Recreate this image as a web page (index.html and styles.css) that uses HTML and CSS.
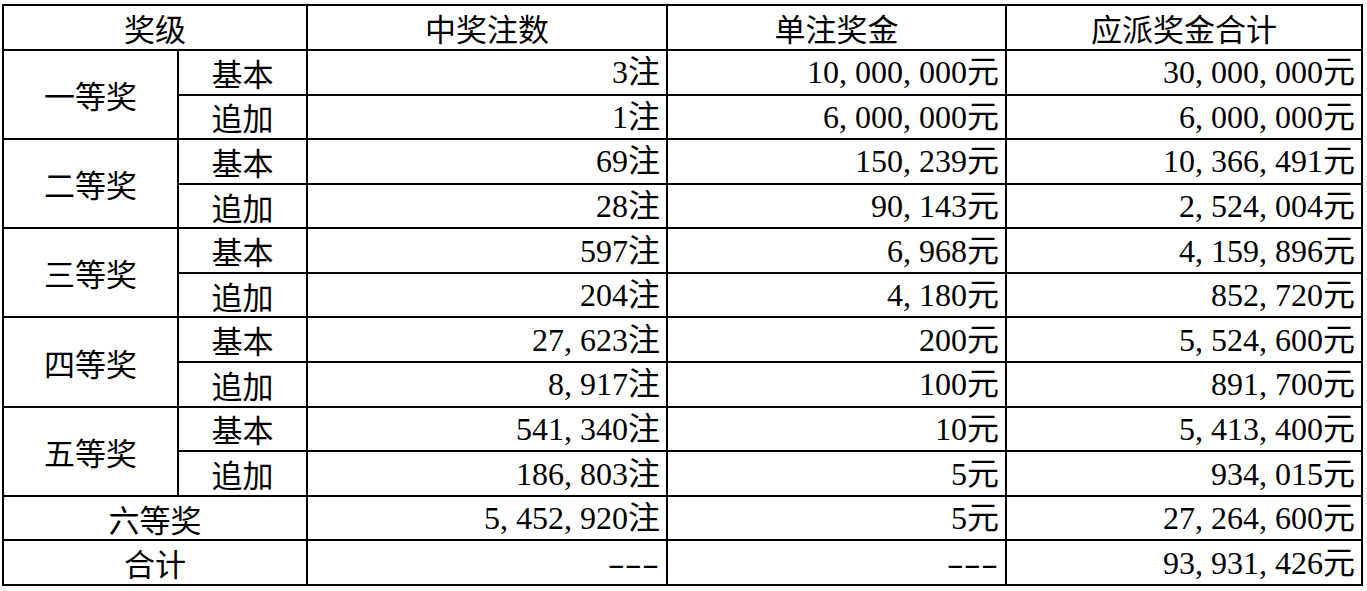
FILE: index.html
```html
<!DOCTYPE html>
<html lang="zh-CN">
<head>
<meta charset="utf-8">
<title>开奖详情</title>
<link rel="stylesheet" href="styles.css">
</head>
<body>
<div class="grid">
  <div class="cell hd span2">奖级</div>
  <div class="cell hd">中奖注数</div>
  <div class="cell hd">单注奖金</div>
  <div class="cell hd">应派奖金合计</div>

  <div class="cell lv rows2">一等奖</div>
  <div class="cell sub">基本</div>
  <div class="cell num">3注</div>
  <div class="cell num">10<span class="c">,</span>000<span class="c">,</span>000元</div>
  <div class="cell num">30<span class="c">,</span>000<span class="c">,</span>000元</div>
  <div class="cell sub">追加</div>
  <div class="cell num">1注</div>
  <div class="cell num">6<span class="c">,</span>000<span class="c">,</span>000元</div>
  <div class="cell num">6<span class="c">,</span>000<span class="c">,</span>000元</div>

  <div class="cell lv rows2">二等奖</div>
  <div class="cell sub">基本</div>
  <div class="cell num">69注</div>
  <div class="cell num">150<span class="c">,</span>239元</div>
  <div class="cell num">10<span class="c">,</span>366<span class="c">,</span>491元</div>
  <div class="cell sub">追加</div>
  <div class="cell num">28注</div>
  <div class="cell num">90<span class="c">,</span>143元</div>
  <div class="cell num">2<span class="c">,</span>524<span class="c">,</span>004元</div>

  <div class="cell lv rows2">三等奖</div>
  <div class="cell sub">基本</div>
  <div class="cell num">597注</div>
  <div class="cell num">6<span class="c">,</span>968元</div>
  <div class="cell num">4<span class="c">,</span>159<span class="c">,</span>896元</div>
  <div class="cell sub">追加</div>
  <div class="cell num">204注</div>
  <div class="cell num">4<span class="c">,</span>180元</div>
  <div class="cell num">852<span class="c">,</span>720元</div>

  <div class="cell lv rows2">四等奖</div>
  <div class="cell sub">基本</div>
  <div class="cell num">27<span class="c">,</span>623注</div>
  <div class="cell num">200元</div>
  <div class="cell num">5<span class="c">,</span>524<span class="c">,</span>600元</div>
  <div class="cell sub">追加</div>
  <div class="cell num">8<span class="c">,</span>917注</div>
  <div class="cell num">100元</div>
  <div class="cell num">891<span class="c">,</span>700元</div>

  <div class="cell lv rows2">五等奖</div>
  <div class="cell sub">基本</div>
  <div class="cell num">541<span class="c">,</span>340注</div>
  <div class="cell num">10元</div>
  <div class="cell num">5<span class="c">,</span>413<span class="c">,</span>400元</div>
  <div class="cell sub">追加</div>
  <div class="cell num">186<span class="c">,</span>803注</div>
  <div class="cell num">5元</div>
  <div class="cell num">934<span class="c">,</span>015元</div>

  <div class="cell lv span2">六等奖</div>
  <div class="cell num">5<span class="c">,</span>452<span class="c">,</span>920注</div>
  <div class="cell num">5元</div>
  <div class="cell num">27<span class="c">,</span>264<span class="c">,</span>600元</div>

  <div class="cell lv span2">合计</div>
  <div class="cell num"><span class="d">---</span></div>
  <div class="cell num"><span class="d">---</span></div>
  <div class="cell num">93<span class="c">,</span>931<span class="c">,</span>426元</div>
</div>
</body>
</html>
```

FILE: styles.css
```css
html, body {
  margin: 0;
  padding: 0;
  background: #ffffff;
}

body {
  padding: 4px 0 0 2px;
  font-family: "Liberation Serif", "Noto Sans CJK SC", serif;
  font-size: 32px;
  color: #000000;
}

.grid {
  display: grid;
  width: 1361px;
  height: 582px;
  box-sizing: border-box;
  padding: 2px;
  gap: 2px;
  background: #000000;
  grid-template-columns: 173px 127px 358px 337px 354px;
  grid-template-rows: 43px repeat(12, 1fr);
}

.cell {
  background: #ffffff;
  display: flex;
  align-items: center;
  line-height: 1;
  white-space: nowrap;
}

.hd,
.lv,
.sub {
  justify-content: center;
  font-family: "Noto Sans CJK SC", sans-serif;
  font-size: 31px;
}

.span2 {
  grid-column: span 2;
}

.rows2 {
  grid-row: span 2;
}

.num {
  justify-content: flex-end;
  padding-right: 6px;
}

.c {
  letter-spacing: 8px;
}

.d {
  display: inline-block;
  transform: scaleX(1.6);
  transform-origin: right center;
  margin-right: 1px;
}
```
